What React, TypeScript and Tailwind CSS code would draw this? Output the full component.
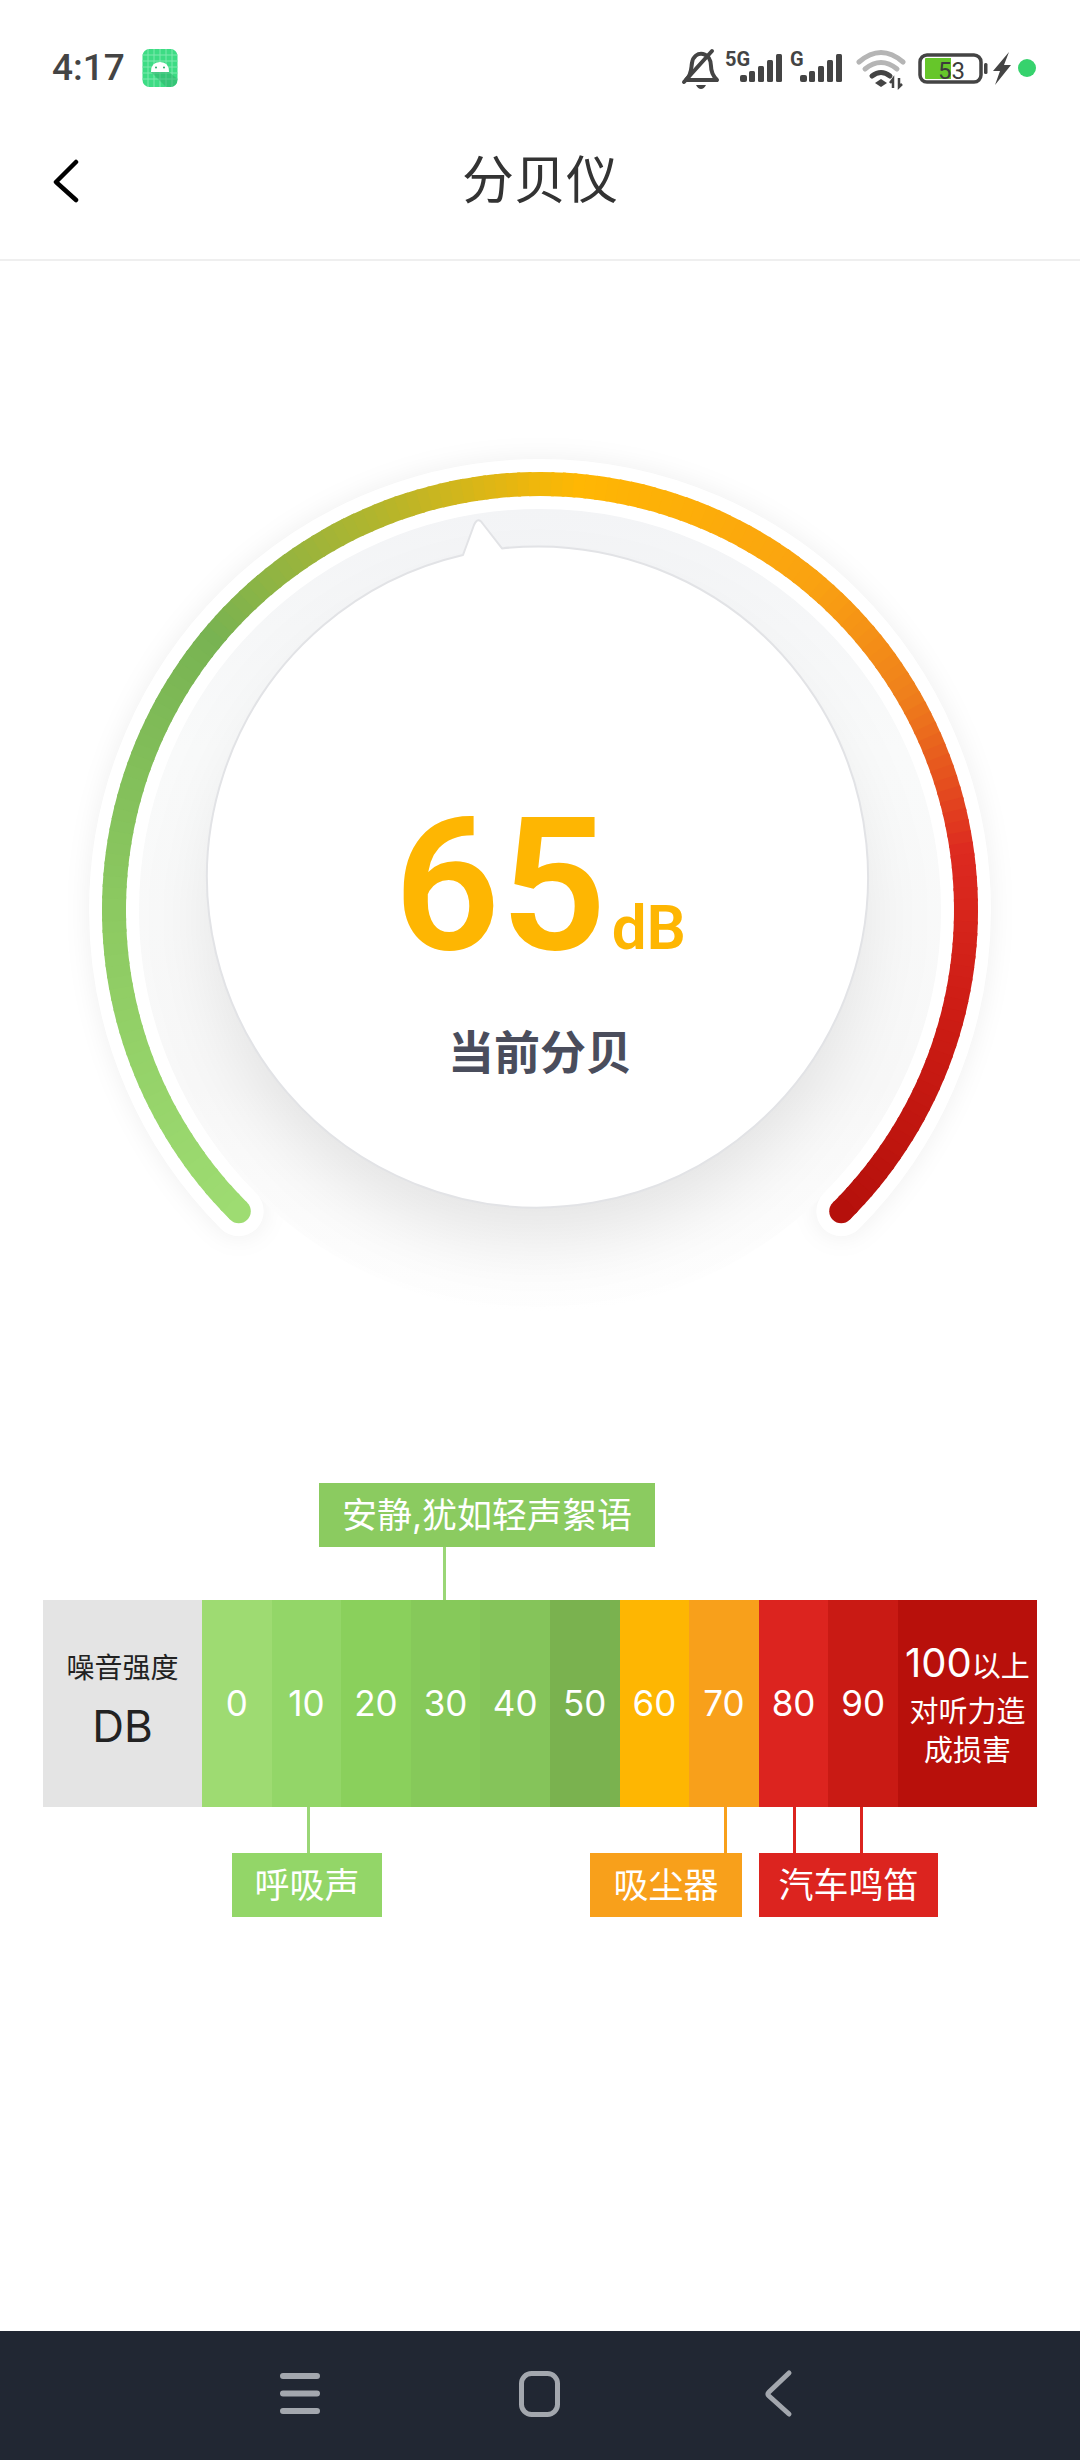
const CX = 540;
const CY = 910;
const R = 426;

const STOPS: [number, string][] = [
  [-135, '#9edc72'],
  [-90, '#8cc961'],
  [-50, '#78b352'],
  [-22, '#b3b52c'],
  [5, '#ffb703'],
  [40, '#faa211'],
  [60, '#ef7f1c'],
  [82, '#dd2a20'],
  [105, '#cc1c14'],
  [135, '#b5100b'],
];

const hex = (c: string) => [1, 3, 5].map((i) => parseInt(c.slice(i, i + 2), 16));

function colorAt(a: number) {
  for (let i = 0; i < STOPS.length - 1; i++) {
    const [a0, c0] = STOPS[i];
    const [a1, c1] = STOPS[i + 1];
    if (a >= a0 && a <= a1) {
      const t = (a - a0) / (a1 - a0);
      const p = hex(c0);
      const q = hex(c1);
      return `rgb(${p.map((v, k) => Math.round(v + (q[k] - v) * t)).join(',')})`;
    }
  }
  return STOPS[STOPS.length - 1][1];
}

function pt(a: number) {
  const r = (a * Math.PI) / 180;
  return [CX + R * Math.sin(r), CY - R * Math.cos(r)];
}

function arc(a0: number, a1: number) {
  const [x0, y0] = pt(a0);
  const [x1, y1] = pt(a1);
  return `M${x0.toFixed(2)} ${y0.toFixed(2)} A${R} ${R} 0 ${a1 - a0 > 180 ? 1 : 0} 1 ${x1.toFixed(2)} ${y1.toFixed(2)}`;
}

const FULL_ARC = arc(-135, 135);
const SEGMENTS: number[] = [];
for (let a = -135; a < 135; a += 1.5) SEGMENTS.push(a);

function Gauge() {
  const [sx, sy] = pt(-135);
  const [ex, ey] = pt(135);
  return (
    <svg className="absolute inset-0" width="1080" height="1222" viewBox="0 261 1080 1222" fill="none">
      <defs>
        <filter id="b30" x="-30%" y="-30%" width="160%" height="160%">
          <feGaussianBlur stdDeviation="36" />
        </filter>
        <filter id="b12" x="-30%" y="-30%" width="160%" height="160%">
          <feGaussianBlur stdDeviation="11" />
        </filter>
        <linearGradient id="well" x1="0" y1="508" x2="0" y2="1312" gradientUnits="userSpaceOnUse">
          <stop offset="0" stopColor="#f3f4f6" />
          <stop offset="0.3" stopColor="#f9fafa" />
          <stop offset="0.72" stopColor="#f8f8f8" />
          <stop offset="1" stopColor="#ffffff" />
        </linearGradient>
      </defs>
      <path d={FULL_ARC} stroke="#000" strokeOpacity="0.05" strokeWidth="56" strokeLinecap="round" filter="url(#b12)" />
      <circle cx={CX} cy={CY} r="402" fill="url(#well)" />
      <circle cx="538" cy="918" r="322" fill="#000" fillOpacity="0.095" filter="url(#b30)" />
      <path d={FULL_ARC} stroke="#fff" strokeWidth="50" strokeLinecap="round" />
      <path
        d="M502 548.4 A330.5 330.5 0 1 1 463 555 L474 525 Q478 516 483 524 Z"
        fill="#fff"
        stroke="#e2e3e6"
        strokeWidth="2"
        strokeLinejoin="round"
      />
      {SEGMENTS.map((a) => (
        <path key={a} d={arc(a, Math.min(a + 1.9, 135))} stroke={colorAt(a + 0.75)} strokeWidth="24" />
      ))}
      <circle cx={sx} cy={sy} r="12" fill={STOPS[0][1]} />
      <circle cx={ex} cy={ey} r="12" fill={STOPS[STOPS.length - 1][1]} />
    </svg>
  );
}

function StatusIcons() {
  return (
    <svg width="370" height="50" viewBox="670 45 370 50" fill="none" className="block">
      {/* muted bell */}
      <path
        d="M686 80 C692 74 691 68 692 63 C693 56 698 53 703 54 C708 55 711 60 711 66 C711 72 713 76 717 80 Z"
        stroke="#444"
        strokeWidth="4"
        strokeLinejoin="round"
      />
      <path d="M684 82 L712 51" stroke="#444" strokeWidth="4" strokeLinecap="round" />
      <path d="M696 85 H706 Q704 89 701 89 Q698 89 696 85 Z" fill="#444" />
      {/* signal 1 */}
      <text x="725" y="66" fill="#444" fontSize="20" fontWeight="700" fontFamily="Roboto, sans-serif">5G</text>
      <rect x="740" y="75" width="7" height="7" rx="2" fill="#444" />
      <rect x="749" y="71" width="6" height="11" rx="1.5" fill="#444" />
      <rect x="758" y="66" width="6" height="16" rx="1.5" fill="#444" />
      <rect x="767" y="60" width="6" height="22" rx="1.5" fill="#444" />
      <rect x="776" y="54" width="6" height="28" rx="1.5" fill="#444" />
      {/* signal 2 */}
      <text x="790" y="66" fill="#444" fontSize="20" fontWeight="700" fontFamily="Roboto, sans-serif">G</text>
      <rect x="800" y="75" width="7" height="7" rx="2" fill="#444" />
      <rect x="809" y="71" width="6" height="11" rx="1.5" fill="#444" />
      <rect x="818" y="66" width="6" height="16" rx="1.5" fill="#444" />
      <rect x="827" y="60" width="6" height="22" rx="1.5" fill="#444" />
      <rect x="836" y="54" width="6" height="28" rx="1.5" fill="#444" />
      {/* wifi */}
      <path d="M859 62 Q881 43 903 62" stroke="#b5b5b5" strokeWidth="5" strokeLinecap="round" />
      <path d="M865 69 Q881 56 897 69" stroke="#b5b5b5" strokeWidth="5" strokeLinecap="round" />
      <path d="M872 76 Q881 69 890 76" stroke="#444" strokeWidth="5" strokeLinecap="round" />
      <path d="M875 83 L881 79 L887 83 L881 87 Z" fill="#444" />
      <path d="M890 83 L893 79 L893 88 M899 78 V87 L902 84" stroke="#444" strokeWidth="2.5" />
      {/* battery */}
      <rect x="920" y="55" width="61" height="27" rx="7" stroke="#444" strokeWidth="3.5" />
      <path d="M926 58 H951 V79 H926 Q925 79 925 78 V59 Q925 58 926 58 Z" fill="#66c62a" />
      <text x="938" y="79" fill="#3c3c3c" fontSize="24" fontFamily="Roboto, sans-serif">53</text>
      <rect x="984" y="63" width="3.5" height="11" rx="1.5" fill="#444" />
      {/* charging */}
      <path d="M1009 52 L993 71 L1000 71 L995 85 L1011 65 L1004 65 Z" fill="#444" />
      <circle cx="1027" cy="68" r="9" fill="#36d26d" />
    </svg>
  );
}

function AndroidBadge() {
  return (
    <svg width="36" height="38" viewBox="0 0 36 38" className="block">
      <rect x="0.5" y="0" width="35" height="38" rx="7" fill="#3ddc84" />
      <path d="M6 0V38M12 0V38M18 0V38M24 0V38M30 0V38M0 6H36M0 12H36M0 18H36M0 24H36M0 30H36" stroke="#7fe9ae" strokeWidth="1" />
      <path d="M9 23 L24 38 H28 Q35 38 35.5 30 L27 23 Z" fill="#2aa866" fillOpacity="0.45" />
      <path d="M9 23 Q9 13 18 13 Q27 13 27 23 Z" fill="#fff" />
      <circle cx="14" cy="18.5" r="1" fill="#2aa866" />
      <circle cx="22" cy="18.5" r="1" fill="#2aa866" />
    </svg>
  );
}

const CELLS = [
  { label: '0', bg: 'bg-[#9edb72]' },
  { label: '10', bg: 'bg-[#93d668]' },
  { label: '20', bg: 'bg-[#8ad05c]' },
  { label: '30', bg: 'bg-[#86c95a]' },
  { label: '40', bg: 'bg-[#85c45a]' },
  { label: '50', bg: 'bg-[#7ab24f]' },
  { label: '60', bg: 'bg-[#feb602]' },
  { label: '70', bg: 'bg-[#f8a01b]' },
  { label: '80', bg: 'bg-[#dc241f]' },
  { label: '90', bg: 'bg-[#c91a14]' },
];

export default function App() {
  return (
    <div className="w-[1080px] h-[2460px] flex flex-col bg-white overflow-hidden font-['Inter','Noto_Sans_CJK_SC',sans-serif]">
      {/* status bar */}
      <div className="h-[135px] shrink-0 flex items-start justify-between pl-[52px] pr-[40px] pt-[45px]">
        <div className="flex items-center gap-[17px] h-[45px]">
          <span className="text-[37px] text-[#444] font-['Roboto',sans-serif] font-medium">4:17</span>
          <AndroidBadge />
        </div>
        <StatusIcons />
      </div>

      {/* header */}
      <div className="relative h-[126px] shrink-0 flex items-start justify-center border-b-2 border-[#efefef]">
        <svg width="30" height="44" viewBox="0 0 30 44" fill="none" className="absolute left-[51px] top-[24px]">
          <path d="M25 3 L5 23 L25 41" stroke="#000" strokeWidth="4.5" strokeLinecap="round" strokeLinejoin="round" />
        </svg>
        <h1 className="text-[52px] leading-[92px] text-[#333] font-normal">分贝仪</h1>
      </div>

      {/* gauge */}
      <div className="relative h-[1222px] shrink-0">
        <Gauge />
        <div className="relative flex flex-col items-center pt-[539px]">
          <div className="flex items-baseline h-[170px] text-[#feb602] font-['Roboto',sans-serif] font-semibold leading-[170px]">
            <span className="text-[186px]">65</span>
            <span className="text-[62px] ml-[5px]">dB</span>
          </div>
          <p className="mt-[52px] text-[46px] leading-[60px] font-bold text-[#4a4d5c]">当前分贝</p>
        </div>
      </div>

      {/* top label */}
      <div className="pl-[319px] shrink-0">
        <div className="w-[336px] h-[64px] flex items-center justify-center bg-[#8bcb60] text-white text-[35px]">
          安静,犹如轻声絮语
        </div>
      </div>
      <div className="h-[53px] pl-[443px] shrink-0">
        <div className="w-[3px] h-full bg-[#9ad676]" />
      </div>

      {/* scale */}
      <div className="flex h-[207px] mx-[43px] shrink-0 text-white">
        <div className="w-[159px] flex flex-col items-center justify-center pb-[8px] bg-[#e4e4e4] text-[#222]">
          <span className="text-[28px] leading-[40px]">噪音强度</span>
          <span className="text-[44px] leading-[50px] mt-[13px]">DB</span>
        </div>
        {CELLS.map((c) => (
          <div key={c.label} className={`flex-1 flex items-center justify-center text-[35px] ${c.bg}`}>
            {c.label}
          </div>
        ))}
        <div className="w-[139px] flex flex-col items-center justify-center bg-[#b8100b] text-[29px] leading-[39px]">
          <span className="leading-[50px]">
            <span className="text-[40px]">100</span>以上
          </span>
          <span>对听力造</span>
          <span>成损害</span>
        </div>
      </div>

      {/* bottom connectors */}
      <div className="flex h-[46px] shrink-0">
        <div className="w-[3px] h-full ml-[307px] bg-[#9ad676]" />
        <div className="w-[3px] h-full ml-[414px] bg-[#f8a01b]" />
        <div className="w-[3px] h-full ml-[66px] bg-[#dc241f]" />
        <div className="w-[3px] h-full ml-[64px] bg-[#dc241f]" />
      </div>

      {/* bottom labels */}
      <div className="flex h-[64px] shrink-0 text-white text-[35px]">
        <div className="ml-[232px] w-[150px] flex items-center justify-center bg-[#93d668]">呼吸声</div>
        <div className="ml-[208px] w-[152px] flex items-center justify-center bg-[#f8a01b]">吸尘器</div>
        <div className="ml-[17px] w-[179px] flex items-center justify-center bg-[#dc241f]">汽车鸣笛</div>
      </div>

      <div className="flex-1" />

      {/* nav bar */}
      <div className="h-[129px] shrink-0 bg-[#212733] flex items-center justify-center">
        <svg width="1080" height="129" viewBox="0 2331 1080 129" fill="none" className="block">
          <path d="M283 2376 H317 M283 2393.5 H317 M283 2411 H317" stroke="#a3a7ae" strokeWidth="6" strokeLinecap="round" />
          <rect x="521.5" y="2373.5" width="36" height="41" rx="10" stroke="#a3a7ae" strokeWidth="5" />
          <path d="M789 2373 L769 2392 Q767 2394 769 2396 L789 2414" stroke="#a3a7ae" strokeWidth="5" strokeLinecap="round" strokeLinejoin="round" />
        </svg>
      </div>
    </div>
  );
}
